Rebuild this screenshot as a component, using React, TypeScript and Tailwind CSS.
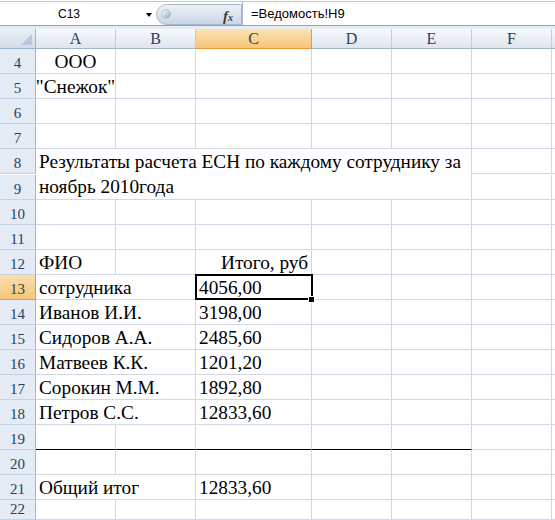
import React from 'react';

type Cell = {
  text?: string;
  align?: 'left' | 'center' | 'right';
  spill?: boolean;
};

const cols = ['A', 'B', 'C', 'D', 'E', 'F', ''];

const rows: Record<number, Cell[]> = {
  4: [{ text: 'ООО', align: 'center' }],
  5: [{ text: '"Снежок"', align: 'center' }],
  12: [{ text: 'ФИО' }, {}, { text: 'Итого, руб', align: 'right' }],
  13: [{ text: 'сотрудника', spill: true }, {}, { text: '4056,00' }],
  14: [{ text: 'Иванов И.И.', spill: true }, {}, { text: '3198,00' }],
  15: [{ text: 'Сидоров А.А.', spill: true }, {}, { text: '2485,60' }],
  16: [{ text: 'Матвеев К.К.', spill: true }, {}, { text: '1201,20' }],
  17: [{ text: 'Сорокин М.М.', spill: true }, {}, { text: '1892,80' }],
  18: [{ text: 'Петров С.С.', spill: true }, {}, { text: '12833,60' }],
  21: [{ text: 'Общий итог', spill: true }, {}, { text: '12833,60' }],
};

const alignClass = {
  left: 'justify-start',
  center: 'justify-center',
  right: 'justify-end',
};

function FormulaBar() {
  return (
    <div className="h-[29px] flex flex-col bg-white">
      <div className="h-[2px] border-b border-[#b9c9dd]" />
      <div className="h-[24px] flex items-center border-b border-[#8fa3bd]">
        <div className="w-[156px] h-full flex items-center relative">
          <span className="w-[138px] text-center font-['Liberation_Sans'] text-[12px] text-black">C13</span>
          <span className="absolute left-[146px] top-[11px] w-0 h-0 border-l-[3.5px] border-r-[3.5px] border-t-[4px] border-l-transparent border-r-transparent border-t-black" />
        </div>
        <div className="w-[86px] h-[21px] mt-[1px] rounded-l-full bg-gradient-to-b from-[#eef2f8] to-[#cbd6e5] border border-[#a7b7cc] flex items-center relative">
          <span className="ml-[4px] w-[10px] h-[10px] rounded-full bg-gradient-to-br from-[#ffffff] to-[#9aa9bd] border border-[#b5c1d1]" />
          <span className="absolute left-[66px] top-[0px] font-['Liberation_Serif'] italic font-bold text-[15px] text-[#404040]">
            f<span className="text-[10px]">x</span>
          </span>
        </div>
        <div className="flex-1 h-full flex items-center border-l border-[#a7b7cc] pl-[8px]">
          <span className="font-['Liberation_Sans'] text-[13px] text-black">=Ведомость!H9</span>
        </div>
      </div>
      <div className="flex-1 bg-[#e6ecf4]" />
    </div>
  );
}

function ColHeader({ label, active }: { label: string; active?: boolean }) {
  return (
    <div
      className={`h-[20px] border-r border-b flex items-center justify-center text-[16px] leading-none ${
        active
          ? 'bg-gradient-to-b from-[#fbe3b4] to-[#f5c679] border-r-[#f29536] border-b-[#f29536] text-[#3c3c3c]'
          : 'bg-gradient-to-b from-[#f7f9fc] to-[#dfe5ee] border-r-[#c0cddd] border-b-[#9eb6ce] text-[#27415f]'
      }`}
    >
      {label}
    </div>
  );
}

function RowHeader({ n, active, short }: { n: number; active?: boolean; short?: boolean }) {
  return (
    <div
      className={`${short ? 'h-[20px]' : 'h-[25px]'} border-r border-b flex items-end justify-center pb-[2px] text-[15px] leading-[15px] ${
        active
          ? 'bg-gradient-to-b from-[#fbe0ac] to-[#f5c57a] border-r-[#f29536] border-b-[#f29536] text-[#3c3c3c]'
          : 'bg-[#e4ebf5] border-r-[#9eb6ce] border-b-[#c5d2e1] text-[#27415f]'
      }`}
    >
      {n}
    </div>
  );
}

function DataCell({ cell, row, col, short }: { cell?: Cell; row: number; col: number; short?: boolean }) {
  const bottomBlack = row === 19 && col <= 4;
  const selected = row === 13 && col === 2;
  return (
    <div
      className={`${short ? 'h-[20px]' : 'h-[25px]'} relative border-r border-b flex items-end px-[3px] ${
        cell?.spill ? 'border-r-transparent' : 'border-r-[#d0d7e5]'
      } ${bottomBlack ? 'border-b-black' : 'border-b-[#d0d7e5]'} ${alignClass[cell?.align ?? 'left']}`}
    >
      {cell?.text && (
        <span className="whitespace-nowrap text-[19.3px] leading-[22px] text-black relative z-[1]">
          {cell.text}
        </span>
      )}
      {selected && (
        <>
          <div className="absolute -left-[1px] -top-[1px] -right-[2px] -bottom-[1px] border-2 border-black z-10" />
          <div className="absolute right-[-4px] bottom-[-4px] w-[7px] h-[7px] bg-black border border-white z-20" />
        </>
      )}
    </div>
  );
}

export default function App() {
  const rowNums = Array.from({ length: 19 }, (_, i) => i + 4);
  return (
    <div className="w-[555px] h-[520px] overflow-hidden bg-white font-['Liberation_Serif']">
      <FormulaBar />
      <div className="grid grid-cols-[36px_80px_80px_116px_80px_80px_80px_1fr]">
        <div className="h-[20px] border-r border-b border-r-[#9eb6ce] border-b-[#9eb6ce] bg-gradient-to-b from-[#e9eef5] to-[#d3dce8] relative">
          <svg className="absolute right-[3px] bottom-[3px]" width="11" height="11" viewBox="0 0 11 11">
            <polygon points="11,0 11,11 0,11" fill="#b7c6d8" />
          </svg>
        </div>
        {cols.map((c, i) => (
          <ColHeader key={i} label={c} active={c === 'C'} />
        ))}
        {rowNums.map((r) => {
          if (r === 8) {
            return (
              <React.Fragment key={r}>
                <RowHeader n={8} />
                <div className="col-span-5 row-span-2 border-r border-b border-[#d0d7e5] px-[3px] text-[19.3px] leading-[25px] text-black whitespace-nowrap">
                  <div>Результаты расчета ЕСН по каждому сотруднику за</div>
                  <div>ноябрь 2010года</div>
                </div>
                <DataCell row={8} col={5} />
                <DataCell row={8} col={6} />
              </React.Fragment>
            );
          }
          if (r === 9) {
            return (
              <React.Fragment key={r}>
                <RowHeader n={9} />
                <DataCell row={9} col={5} />
                <DataCell row={9} col={6} />
              </React.Fragment>
            );
          }
          const cells = rows[r] ?? [];
          const short = r === 22;
          return (
            <React.Fragment key={r}>
              <RowHeader n={r} active={r === 13} short={short} />
              {cols.map((_, ci) => (
                <DataCell key={ci} cell={cells[ci]} row={r} col={ci} short={short} />
              ))}
            </React.Fragment>
          );
        })}
      </div>
    </div>
  );
}
